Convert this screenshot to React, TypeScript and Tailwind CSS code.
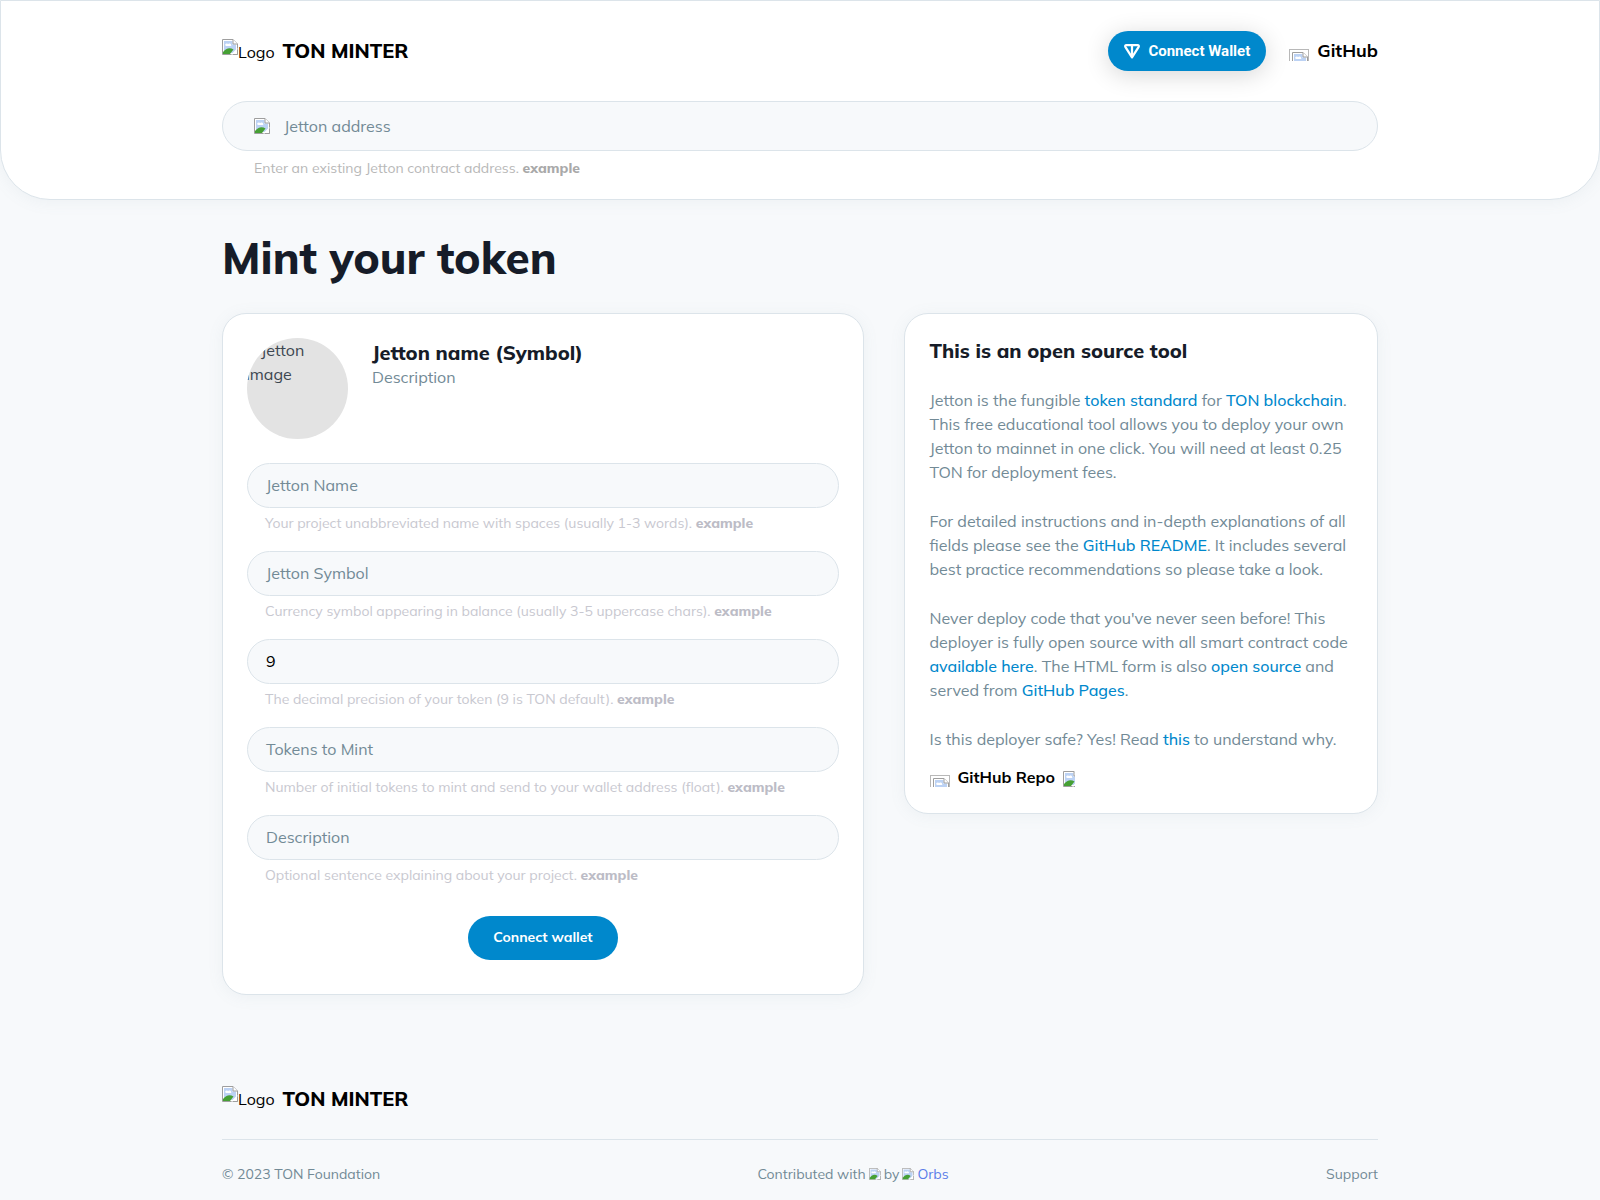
import type { ReactNode } from "react";

const BrokenImage = ({ className = "" }: { className?: string }) => (
  <svg viewBox="0 0 16 16" className={`w-4 h-4 shrink-0 ${className}`}>
    <path d="M0.5 0.5H11L15.5 5V15.5H0.5Z" fill="#fff" stroke="#9e9e9e" />
    <path d="M2 2H10.5V5.5H14V14H2Z" fill="#bcd2f4" />
    <path d="M3.5 6.5a1.6 1.2 0 0 1 2.6-1.4 1.6 1.2 0 0 1 3 .6 1 .9 0 0 1-.3 1.4H4.3a1 .8 0 0 1-.8-.6Z" fill="#fff" />
    <path d="M1 15V13C4 9 8 8 11.5 10.5L8 15Z" fill="#46a034" />
    <path d="M11 0.5V5H15.5" fill="#fff" stroke="#9e9e9e" />
    <path d="M9 15.5l6.5-6.5v6.5Z" fill="#fff" />
    <path d="M15.5 10.5v5H11" fill="none" stroke="#9e9e9e" />
  </svg>
);

const CutImage = ({ className = "" }: { className?: string }) => (
  <span className={`w-5 h-3 overflow-hidden border border-[#b8b8b8] border-b-0 pl-[2px] pt-[2px] ${className}`}>
    <BrokenImage />
  </span>
);

const Logo = () => (
  <a className="flex items-center gap-2">
    <span className="flex items-start text-base leading-6 text-black font-normal">
      <BrokenImage />
      <span className="mt-[1px]">Logo</span>
    </span>
    <span className="text-xl leading-6 font-extrabold text-black">TON MINTER</span>
  </a>
);

const fields = [
  { placeholder: "Jetton Name", help: "Your project unabbreviated name with spaces (usually 1-3 words)." },
  { placeholder: "Jetton Symbol", help: "Currency symbol appearing in balance (usually 3-5 uppercase chars)." },
  { placeholder: "9", help: "The decimal precision of your token (9 is TON default).", filled: true },
  { placeholder: "Tokens to Mint", help: "Number of initial tokens to mint and send to your wallet address (float)." },
  { placeholder: "Description", help: "Optional sentence explaining about your project." },
];

const A = ({ children }: { children: ReactNode }) => (
  <a className="text-[#0088cc] font-medium">{children}</a>
);

export default function App() {
  return (
    <div className="min-h-[1200px] bg-[#f7f9fb] font-['Mulish','Nunito','Lato',sans-serif] text-[#728a96]">
      <header className="bg-white border border-[#dce4ea] rounded-b-[50px] h-[200px] shadow-[0_2px_16px_rgba(114,138,150,0.08)]">
        <div className="w-[1156px] mx-auto">
          <div className="flex items-center justify-between h-[100px]">
            <Logo />
            <div className="flex items-center gap-[23px]">
              <button className="h-10 w-[158px] rounded-[40px] bg-[#0088cc] text-white flex items-center justify-center gap-[7px] font-['Roboto',sans-serif] font-bold text-[15px] shadow-[0_4px_24px_rgba(0,0,0,0.16)]">
                <svg viewBox="0 0 24 24" className="w-[18px] h-[18px] -ml-[1px]" fill="none" stroke="#fff" strokeWidth="3" strokeLinejoin="round">
                  <path d="M4.5 4H19.5C20.8 4 21.5 5.3 20.9 6.4L12 20.5L3.1 6.4C2.5 5.3 3.2 4 4.5 4Z" />
                  <path d="M12 4V20" />
                </svg>
                Connect Wallet
              </button>
              <a className="flex items-center gap-2 text-lg font-bold text-black">
                <CutImage className="mt-2" />
                GitHub
              </a>
            </div>
          </div>
          <div className="h-[50px] rounded-[40px] bg-[#f7f9fb] border border-[#dce4ea] flex items-center pl-[31px] gap-[14px]">
            <BrokenImage />
            <span className="text-base">Jetton address</span>
          </div>
          <p className="pl-8 mt-[7px] text-sm leading-5 text-[#b8b8b8]">
            Enter an existing Jetton contract address. <b className="font-extrabold text-[#a9a9a9]">example</b>
          </p>
        </div>
      </header>

      <main className="w-[1156px] mx-auto">
        <h1 className="text-[44px] leading-[60px] font-extrabold text-[#161c28] mt-[28px]">Mint your token</h1>
        <div className="flex items-start gap-10 mt-[25px]">
          <section className="w-[642px] h-[682px] bg-white border border-[#dce4ea] rounded-3xl p-6 shadow-[0_2px_16px_rgba(114,138,150,0.08)]">
            <div className="flex gap-6 h-[101px]">
              <div className="w-[101px] h-[101px] rounded-full bg-[#e3e3e3] overflow-hidden text-[#3c4650] text-base leading-6 shrink-0">
                <div className="pl-[14px]">Jetton</div>
                <div className="-ml-[1px]">image</div>
              </div>
              <div className="pt-[1px]">
                <div className="text-xl leading-7 font-extrabold text-[#161c28]">Jetton name (Symbol)</div>
                <div className="text-base leading-5">Description</div>
              </div>
            </div>
            <div className="mt-6 flex flex-col">
              {fields.map((f) => (
                <div key={f.placeholder} className="h-[88px]">
                  <div className={`h-[45px] rounded-[40px] bg-[#f7f9fb] border border-[#dce4ea] flex items-center px-[18px] pb-[2px] text-base ${f.filled ? "text-black" : ""}`}>
                    {f.placeholder}
                  </div>
                  <p className="pl-[18px] mt-[5px] text-sm leading-5 text-[#c8c8d0]">
                    {f.help} <b className="font-extrabold text-[#bcbcc6]">example</b>
                  </p>
                </div>
              ))}
            </div>
            <div className="flex justify-center mt-[13px]">
              <button className="w-[150px] h-11 rounded-[40px] bg-[#0088cc] text-white text-sm font-bold pb-[2px]">Connect wallet</button>
            </div>
          </section>

          <section className="w-[474px] h-[501px] bg-white border border-[#dce4ea] rounded-3xl pl-[24.5px] pr-6 pt-[23px] pb-6 shadow-[0_2px_16px_rgba(114,138,150,0.08)]">
            <h2 className="text-xl leading-7 font-extrabold text-[#161c28] mb-[23px]">This is an open source tool</h2>
            <div className="text-base leading-6 flex flex-col gap-[24.5px]">
              <p>Jetton is the fungible <A>token standard</A> for <A>TON blockchain</A>. This free educational tool allows you to deploy your own Jetton to mainnet in one click. You will need at least 0.25 TON for deployment fees.</p>
              <p>For detailed instructions and in-depth explanations of all fields please see the <A>GitHub README</A>. It includes several best practice recommendations so please take a look.</p>
              <p className="mt-px">Never deploy code that you've never seen before! This deployer is fully open source with all smart contract code <A>available here</A>. The HTML form is also <A>open source</A> and served from <A>GitHub Pages</A>.</p>
              <p>Is this deployer safe? Yes! Read <A>this</A> to understand why.</p>
            </div>
            <a className="flex items-center mt-[14px] font-bold text-base text-black">
              <CutImage className="mt-2 mr-2" />
              GitHub Repo
              <span className="w-3 h-4 overflow-hidden ml-2 mt-1">
                <BrokenImage />
              </span>
            </a>
          </section>
        </div>
      </main>

      <footer className="w-[1156px] mx-auto mt-[91px]">
        <div className="pb-[28px] border-b border-[#dce4ea]">
          <Logo />
        </div>
        <div className="flex items-center justify-between mt-[24px] text-sm leading-5">
          <span>© 2023 TON Foundation</span>
          <span className="flex items-center gap-[3px]">
            Contributed with <BrokenImage className="!w-3 !h-3" /> by <BrokenImage className="!w-3 !h-3" /> <span className="text-[#5b7de8]">Orbs</span>
          </span>
          <span>Support</span>
        </div>
      </footer>
    </div>
  );
}
